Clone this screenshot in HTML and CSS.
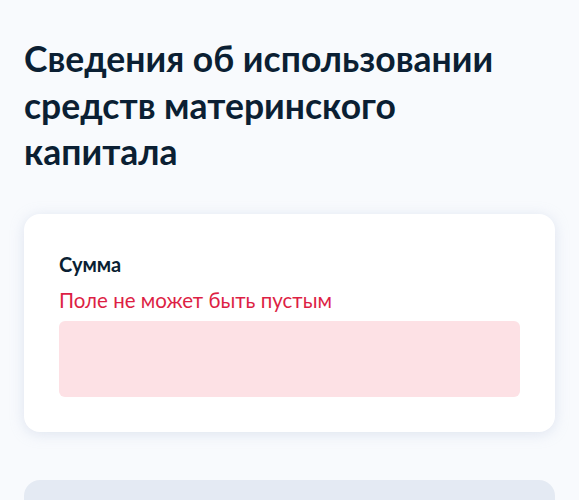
FILE: index.html
```html
<!DOCTYPE html>
<html lang="ru">
<head>
  <meta charset="UTF-8" />
  <meta name="viewport" content="width=device-width, initial-scale=1.0" />
  <title>Сведения об использовании средств материнского капитала</title>
  <link rel="stylesheet" href="styles.css">
</head>
<body>
  <main class="page">
    <h1 class="page-title">Сведения об использовании средств материнского капитала</h1>

    <section class="card">
      <label class="field-label" for="sum">Сумма</label>
      <p class="field-error">Поле не может быть пустым</p>
      <input class="field-input error" id="sum" type="text" />
    </section>

    <section class="card card-muted"></section>
  </main>
</body>
</html>
```

FILE: styles.css
```css
:root {
  --bg: #f8fafd;
  --text: #0b1f33;
  --error: #dd1f45;
  --error-bg: #fde1e5;
  --muted: #e4eaf3;
}
* {
  box-sizing: border-box;
}
body {
  margin: 0;
  font-family: Lato, "Noto Sans", sans-serif;
  background-color: var(--bg);
  color: var(--text);
}
.page {
  padding: 36px 24px 0;
}
.page-title {
  max-width: 510px;
  margin: 0 0 38px;
  font-size: 35.5px;
  line-height: 46.5px;
  font-weight: 700;
}
.card {
  display: flex;
  flex-direction: column;
  background: #fff;
  border-radius: 16px;
  padding: 38px 35px 35px;
  box-shadow: 0 2px 14px rgba(176, 190, 215, 0.35);
}
.field-label {
  font-size: 20px;
  line-height: 24px;
  font-weight: 700;
}
.field-error {
  margin: 12px 0 9px;
  font-size: 20.5px;
  line-height: 24px;
  color: var(--error);
}
.field-input {
  height: 76px;
  border: none;
  border-radius: 6px;
  background: #f5f7fa;
  font: inherit;
}
.field-input.error {
  background: var(--error-bg);
}
.card-muted {
  margin-top: 48px;
  height: 60px;
  background: var(--muted);
  box-shadow: none;
}
```
